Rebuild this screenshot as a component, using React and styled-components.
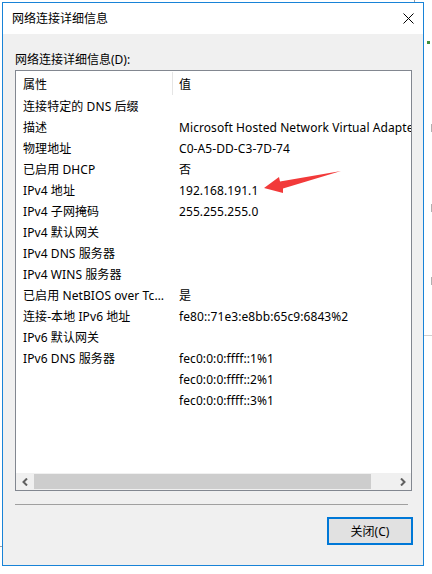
import React from 'react';
import styled, { createGlobalStyle } from 'styled-components';

const Global = createGlobalStyle`
  html, body { margin: 0; padding: 0; background: #ffffff; }
  body {
    font-family: "Noto Sans", "Noto Sans CJK SC", sans-serif;
    font-size: 12px;
    color: #000;
  }
  * { box-sizing: border-box; }
`;

const Desktop = styled.div`
  position: relative;
  width: 432px;
  height: 574px;
  overflow: hidden;
  padding: 2px 0 0 2px;
`;

const Mark = styled.div`
  position: absolute;
  background: ${p => p.$c || '#9a9a9a'};
`;

const Window = styled.div`
  position: relative;
  width: 422px;
  height: 564px;
  border: 1px solid #1883d7;
  background: #f0f0f0;
  display: flex;
  flex-direction: column;
`;

const TitleBar = styled.div`
  height: 31px;
  flex: none;
  background: #ffffff;
  display: flex;
  align-items: center;
  justify-content: space-between;
  padding: 0 9px 0 9px;
`;

const Title = styled.div`
  font-size: 12px;
  line-height: 16px;
`;

const CloseIcon = styled.svg`
  width: 11px;
  height: 11px;
  display: block;
`;

const Body = styled.div`
  flex: 1;
  display: flex;
  flex-direction: column;
  padding: 17px 11px 0 12px;
`;

const Label = styled.div`
  height: 16px;
  line-height: 18px;
`;

const ListBox = styled.div`
  position: relative;
  margin-top: 3px;
  width: 397px;
  height: 421px;
  border: 1px solid #828790;
  background: #ffffff;
  display: flex;
  flex-direction: column;
`;

const Viewport = styled.div`
  flex: 1;
  overflow: hidden;
  white-space: nowrap;
  letter-spacing: 0.08px;
`;

const HeaderRow = styled.div`
  display: grid;
  grid-template-columns: 156px 1px max-content;
  height: 24px;
  align-items: center;
`;

const HeaderCell = styled.div`
  padding-left: ${p => p.$pl}px;
  height: 24px;
  line-height: 27px;
`;

const HeaderDivider = styled.div`
  width: 1px;
  height: 23px;
  align-self: end;
  background: #e5e5e5;
`;

const Row = styled.div`
  display: grid;
  grid-template-columns: 157px max-content;
  height: 21px;
  line-height: 24px;
`;

const NameCell = styled.div`
  padding-left: 7px;
  padding-right: 6px;
  overflow: hidden;
  text-overflow: ellipsis;
`;

const ValueCell = styled.div`
  padding-left: 6px;
`;

const ScrollBar = styled.div`
  height: 17px;
  flex: none;
  display: flex;
  background: #f0f0f0;
`;

const ScrollBtn = styled.div`
  width: 17px;
  height: 17px;
  display: flex;
  align-items: center;
  justify-content: center;
`;

const Track = styled.div`
  flex: 1;
  display: flex;
  align-items: stretch;
  padding: 1px 0 1px 1px;
`;

const Thumb = styled.div`
  width: 337px;
  background: #cdcdcd;
`;

const ArrowOverlay = styled.svg`
  position: absolute;
  left: -1px;
  top: -1px;
  width: 397px;
  height: 421px;
  pointer-events: none;
`;

const Separator = styled.div`
  margin-top: 13px;
  width: 393px;
  height: 1px;
  background: #a0a0a0;
`;

const ButtonRow = styled.div`
  display: flex;
  justify-content: flex-end;
  margin-top: 12px;
  margin-right: -1px;
`;

const Button = styled.button`
  width: 86px;
  height: 28px;
  border: 2px solid #0078d7;
  background: #e1e1e1;
  font-family: "Noto Sans", "Noto Sans CJK SC", sans-serif;
  font-size: 12px;
  color: #000;
  padding: 1px 0 0 0;
  line-height: 22px;
`;

const rows = [
  ['连接特定的 DNS 后缀', ''],
  ['描述', 'Microsoft Hosted Network Virtual Adapter'],
  ['物理地址', 'C0-A5-DD-C3-7D-74'],
  ['已启用 DHCP', '否'],
  ['IPv4 地址', '192.168.191.1'],
  ['IPv4 子网掩码', '255.255.255.0'],
  ['IPv4 默认网关', ''],
  ['IPv4 DNS 服务器', ''],
  ['IPv4 WINS 服务器', ''],
  ['已启用 NetBIOS over Tcpip', '是'],
  ['连接-本地 IPv6 地址', 'fe80::71e3:e8bb:65c9:6843%2'],
  ['IPv6 默认网关', ''],
  ['IPv6 DNS 服务器', 'fec0:0:0:ffff::1%1'],
  ['', 'fec0:0:0:ffff::2%1'],
  ['', 'fec0:0:0:ffff::3%1'],
];

const Chevron = ({ dir }) => (
  <svg width="6" height="8" viewBox="0 0 6 8">
    <polyline
      points={dir === 'left' ? '5,0.5 1.5,4 5,7.5' : '1,0.5 4.5,4 1,7.5'}
      fill="none"
      stroke="#606060"
      strokeWidth="2"
    />
  </svg>
);

export default function App() {
  return (
    <>
      <Global />
      <Desktop>
        <Mark style={{ left: 414, top: 0, width: 1, height: 2 }} />
        <Mark $c="#3f8f3f" style={{ left: 427, top: 41, width: 3, height: 3 }} />
        <Mark $c="#b0b0b0" style={{ left: 431, top: 124, width: 1, height: 8 }} />
        <Mark $c="#b0b0b0" style={{ left: 431, top: 204, width: 1, height: 8 }} />
        <Mark $c="#b0b0b0" style={{ left: 431, top: 277, width: 1, height: 8 }} />
        <Mark $c="#d0d0d0" style={{ left: 424, top: 335, width: 8, height: 1 }} />
        <Mark $c="#a0a0a0" style={{ left: 0, top: 546, width: 2, height: 1 }} />
        <Window>
          <TitleBar>
            <Title>网络连接详细信息</Title>
            <CloseIcon viewBox="0 0 11 11">
              <path d="M0.5 0.5 L10.5 10.5 M10.5 0.5 L0.5 10.5" stroke="#000" strokeWidth="1" fill="none" />
            </CloseIcon>
          </TitleBar>
          <Body>
            <Label>网络连接详细信息(D):</Label>
            <ListBox>
              <Viewport>
                <HeaderRow>
                  <HeaderCell $pl={7}>属性</HeaderCell>
                  <HeaderDivider />
                  <HeaderCell $pl={6}>值</HeaderCell>
                </HeaderRow>
                {rows.map(([n, v], i) => (
                  <Row key={i}>
                    <NameCell>{n}</NameCell>
                    <ValueCell>{v}</ValueCell>
                  </Row>
                ))}
              </Viewport>
              <ScrollBar>
                <ScrollBtn><Chevron dir="left" /></ScrollBtn>
                <Track><Thumb /></Track>
                <ScrollBtn><Chevron dir="right" /></ScrollBtn>
              </ScrollBar>
              <ArrowOverlay viewBox="0 0 397 421">
                <polygon
                  points="249,118 264,107 265,111.5 326,101 268,118.5 268,123"
                  fill="#f23a3a"
                />
              </ArrowOverlay>
            </ListBox>
            <Separator />
            <ButtonRow>
              <Button>关闭(C)</Button>
            </ButtonRow>
          </Body>
        </Window>
      </Desktop>
    </>
  );
}
